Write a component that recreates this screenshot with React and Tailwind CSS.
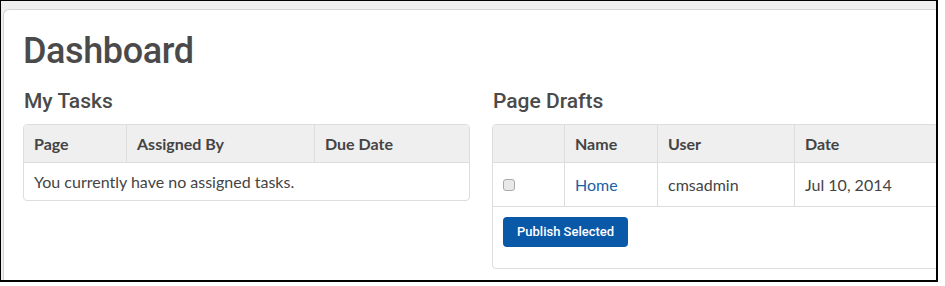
import React from 'react';

const tasksCols = ['Page', 'Assigned By', 'Due Date'];

const drafts = [{ name: 'Home', user: 'cmsadmin', date: 'Jul 10, 2014' }];

const App = () => {
  return (
    <div className="w-[945px] h-[286px] bg-white overflow-hidden">
      {/* screenshot frame */}
      <div className="w-[938px] h-[282px] border-l border-t border-r-2 border-b-2 border-black bg-[#efefef] overflow-hidden pt-[8px] pl-[2px]">
        <div className="w-[960px] h-[300px] bg-white border-l border-t border-[#d4d4d4] rounded-tl-[6px] pl-[19px] pt-[21px] text-[#4a4a4a]">
          <h1 className="font-['Roboto',sans-serif] font-medium text-[36px] leading-[40px] tracking-[-0.4px]">Dashboard</h1>

          <div className="grid grid-cols-[447px_447px] gap-x-[22px] mt-[17px]">
            {/* My Tasks */}
            <div>
              <h2 className="font-['Roboto',sans-serif] font-medium text-[21px] leading-[26px] ml-[1px]">My Tasks</h2>
              <div className="mt-[10px] border border-[#dddddd] rounded-[4px] overflow-hidden font-['Lato',sans-serif] text-[16px] text-[#444]">
                <div className="grid grid-cols-[102px_188px_1fr] bg-[#efefef] border-b border-[#dddddd] h-[38px] font-bold">
                  {tasksCols.map((c, i) => (
                    <div key={c} className={`px-[10px] flex items-center ${i > 0 ? 'border-l border-[#dddddd]' : ''}`}>
                      {c}
                    </div>
                  ))}
                </div>
                <div className="h-[37px] px-[10px] flex items-center">You currently have no assigned tasks.</div>
              </div>
            </div>

            {/* Page Drafts */}
            <div>
              <h2 className="font-['Roboto',sans-serif] font-medium text-[21px] leading-[26px] ml-[1px]">Page Drafts</h2>
              <div className="mt-[10px] border border-[#dddddd] rounded-[4px] overflow-hidden font-['Lato',sans-serif] text-[16px] text-[#444] h-[145px]">
                <div className="grid grid-cols-[71px_93px_137px_1fr] bg-[#efefef] border-b border-[#dddddd] h-[38px] font-bold">
                  <div />
                  {['Name', 'User', 'Date'].map((c) => (
                    <div key={c} className="px-[10px] flex items-center border-l border-[#dddddd]">
                      {c}
                    </div>
                  ))}
                </div>
                {drafts.map((d) => (
                  <div key={d.name} className="grid grid-cols-[71px_93px_137px_1fr] h-[44px] border-b border-[#dddddd]">
                    <div className="px-[10px] flex items-center">
                      <span className="w-[12px] h-[12px] rounded-[3px] border border-[#a9a9a9] bg-[#e9e9e9]" />
                    </div>
                    <div className="px-[10px] flex items-center border-l border-[#dddddd] text-[#1b5fa8]">{d.name}</div>
                    <div className="px-[10px] flex items-center border-l border-[#dddddd]">{d.user}</div>
                    <div className="px-[10px] flex items-center border-l border-[#dddddd]">{d.date}</div>
                  </div>
                ))}
                <div className="px-[10px] pt-[10px]">
                  <button className="h-[30px] px-[14px] rounded-[4px] bg-[#0a58a8] text-white font-['Roboto',sans-serif] font-medium text-[13px]">
                    Publish Selected
                  </button>
                </div>
              </div>
            </div>
          </div>
        </div>
      </div>
    </div>
  );
};

export default App;
